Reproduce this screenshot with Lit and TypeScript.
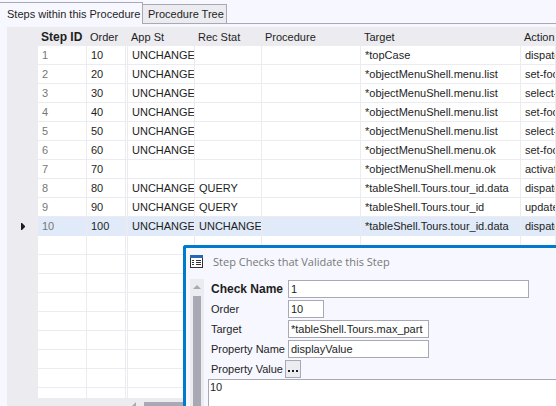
import { LitElement, html, css } from "lit";
import { customElement } from "lit/decorators.js";
import { classMap } from "lit/directives/class-map.js";

type Step = [id: string, order: string, app: string, rec: string, procedure: string, target: string, action: string];

const steps: Step[] = [
  ["1", "10", "UNCHANGED", "", "", "*topCase", "dispatch"],
  ["2", "20", "UNCHANGED", "", "", "*objectMenuShell.menu.list", "set-focus"],
  ["3", "30", "UNCHANGED", "", "", "*objectMenuShell.menu.list", "select-item"],
  ["4", "40", "UNCHANGED", "", "", "*objectMenuShell.menu.list", "set-focus"],
  ["5", "50", "UNCHANGED", "", "", "*objectMenuShell.menu.list", "select-item"],
  ["6", "60", "UNCHANGED", "", "", "*objectMenuShell.menu.ok", "set-focus"],
  ["7", "70", "", "", "", "*objectMenuShell.menu.ok", "activate"],
  ["8", "80", "UNCHANGED", "QUERY", "", "*tableShell.Tours.tour_id.data", "dispatch"],
  ["9", "90", "UNCHANGED", "QUERY", "", "*tableShell.Tours.tour_id", "update"],
  ["10", "100", "UNCHANGED", "UNCHANGED", "", "*tableShell.Tours.tour_id.data", "dispatch"],
];
const blank: Step = ["", "", "", "", "", "", ""];
const current = 9;

@customElement("step-grid")
export class StepGrid extends LitElement {
  static styles = css`
    :host { display: flex; flex-direction: column; flex: 1; min-width: 0; min-height: 0; background: #ebebf0; }
    .rows { flex: 1; min-height: 0; overflow: hidden; }
    table { width: 100%; table-layout: fixed; border-collapse: separate; border-spacing: 0; }
    .c-mark { width: 31px; }
    .c-id { width: 49px; }
    .c-order { width: 41px; }
    .c-stat { width: 67px; }
    .c-proc { width: 99px; }
    .c-target { width: 160px; }
    th, td { box-sizing: border-box; padding: 0 0 0 4px; text-align: left; font-weight: normal; white-space: nowrap; overflow: hidden; line-height: 18px; height: 19px; }
    th { padding-left: 3px; }
    td { background: #fff; border-right: 1px solid #ebebf0; border-bottom: 1px solid #ebebf0; }
    th.key { font: bold 12px/18px "Liberation Sans", sans-serif; }
    td.id { color: #777; }
    td.frozen { border-right: 3px double #ebebf0; }
    td.mark { background: #ebebf0; padding: 0 0 0 14px; border: 0; }
    .mark svg { display: block; }
    tr.on td:not(.mark) { background: #e0eaf8; border-bottom-color: #e0eaf8; }
    .hbar { display: flex; align-items: flex-end; gap: 8px; height: 8px; padding-left: 124px; }
    .hbar .thumb { flex: 1; height: 4px; background: #a9a9b5; }
  `;

  private row(s: Step, i: number) {
    const on = i === current;
    return html`<tr class=${classMap({ on })}>
      <td class="mark">${on ? html`<svg width="4" height="7" viewBox="0 0 4 7"><path d="M0 0h1l3 3v1l-3 3H0z" fill="#1e1e1e"/></svg>` : ""}</td>
      <td class="id">${s[0]}</td>
      <td class="frozen">${s[1]}</td>
      ${s.slice(2).map((v) => html`<td>${v}</td>`)}
    </tr>`;
  }

  render() {
    return html`
      <div class="rows">
        <table>
          <colgroup>
            <col class="c-mark"><col class="c-id"><col class="c-order"><col class="c-stat"><col class="c-stat"><col class="c-proc"><col class="c-target"><col>
          </colgroup>
          <thead>
            <tr><th></th><th class="key">Step ID</th><th>Order</th><th>App St</th><th>Rec Stat</th><th>Procedure</th><th>Target</th><th>Action</th></tr>
          </thead>
          <tbody>${[...steps, ...Array(30).fill(blank)].map((s, i) => this.row(s, i))}</tbody>
        </table>
      </div>
      <div class="hbar">
        <svg width="5" height="4" viewBox="0 0 5 4"><path d="M5 0v4H1z" fill="#a9a9b5"/></svg>
        <div class="thumb"></div>
      </div>`;
  }
}

@customElement("step-checks")
export class StepChecks extends LitElement {
  static styles = css`
    :host { display: flex; flex-direction: column; box-sizing: border-box; background: #f7f7ff; border: 3px solid #007acc; border-width: 3px 0 0 3px; border-top-left-radius: 3px; overflow: hidden; }
    header { display: flex; align-items: center; gap: 10px; height: 27px; padding: 0 4px; color: #777; }
    h2 { margin: 0; font: 11px/16px "Open Sans", sans-serif; }
    .body { flex: 1; min-height: 0; display: flex; gap: 4px; padding: 4px 0 0 4px; }
    .vbar { width: 14px; display: flex; flex-direction: column; align-items: center; gap: 7px; padding-top: 6px; box-sizing: border-box; background: #ebebf0; }
    .vbar .thumb { flex: 1; width: 8px; background: #a9a9b5; }
    .form { flex: 1; min-width: 0; display: flex; flex-direction: column; gap: 2px; padding-top: 1px; }
    .field { display: grid; grid-template-columns: 77px 1fr; align-items: center; padding-left: 3px; height: 18px; }
    .field.value { grid-template-columns: 74px 1fr; height: 17px; }
    label { line-height: 18px; white-space: nowrap; }
    label.key { font: bold 12px/18px "Liberation Sans", sans-serif; }
    input, textarea, button { box-sizing: border-box; font: inherit; color: inherit; border: 1px solid #a9a9b5; border-radius: 0; background: #fff; outline: 0; margin: 0; }
    input { height: 18px; padding: 0 2px; }
    .wide { width: 241px; max-width: 100%; }
    .mid { width: 141px; }
    .short { width: 36px; }
    button { width: 16px; height: 18px; padding: 4px 0 0; background: #ebebf0; display: grid; place-items: center; }
    textarea { flex: 1; min-height: 0; width: 100%; resize: none; padding: 0 1px; line-height: 15px; border-right: 0; border-bottom: 0; display: block; overflow: hidden; }
  `;

  render() {
    return html`
      <header>
        <svg width="13" height="13" viewBox="0 0 13 13" shape-rendering="crispEdges">
          <path d="M0 0h13v13H0z" fill="#333337"/><path d="M1 3h11v9H1z" fill="#fff"/><path d="M0 0h13v3H0z" fill="#2569b3"/>
          <path d="M2 5h2v1H2zM6 5h5v1H6zM2 7h2v1H2zM6 7h5v1H6zM2 9h2v1H2zM6 9h5v1H6z" fill="#333337"/>
        </svg>
        <h2>Step Checks that Validate this Step</h2>
      </header>
      <div class="body">
        <div class="vbar">
          <svg width="8" height="4" viewBox="0 0 8 4"><path d="M4 0l4 4H0z" fill="#a9a9b5"/></svg>
          <div class="thumb"></div>
        </div>
        <form class="form">
          <div class="field"><label class="key" for="name">Check Name</label><input id="name" class="wide" value="1"></div>
          <div class="field"><label for="order">Order</label><input id="order" class="short" value="10"></div>
          <div class="field"><label for="target">Target</label><input id="target" class="mid" value="*tableShell.Tours.max_part"></div>
          <div class="field"><label for="prop">Property Name</label><input id="prop" class="mid" value="displayValue"></div>
          <div class="field value"><label for="value">Property Value</label>
            <button type="button" aria-label="Edit value"><svg width="10" height="2" viewBox="0 0 10 2" shape-rendering="crispEdges"><path d="M0 0h2v2H0zM4 0h2v2H4zM8 0h2v2H8z" fill="#1e1e1e"/></svg></button>
          </div>
          <textarea id="value" .value=${"10"}></textarea>
        </form>
      </div>`;
  }
}

@customElement("app-root")
export class AppRoot extends LitElement {
  static styles = css`
    :host { display: flex; flex-direction: column; position: relative; box-sizing: border-box; height: 100vh; overflow: hidden; background: #f7f7ff; color: #1e1e1e; font: 11px/18px "Liberation Sans", Arial, sans-serif; }
    nav { display: flex; align-items: stretch; height: 22px; padding-top: 2px; }
    nav button { box-sizing: border-box; margin: 0; font: inherit; color: inherit; border: 1px solid #a9a9b5; background: #ebebf0; padding: 0 5px; white-space: nowrap; }
    nav .active { width: 143px; text-align: left; border-left: 0; border-bottom: 0; background: #f7f7ff; padding: 0 7px; }
    nav .other { width: 84px; margin-top: 2px; border-left: 0; }
    nav .rest { flex: 1; border-bottom: 1px solid #a9a9b5; }
    main { flex: 1; min-height: 0; display: flex; padding: 3px 0 0 7px; }
    .window { position: absolute; left: 183px; top: 245px; right: 0; bottom: 0; }
  `;

  render() {
    return html`
      <nav>
        <button class="active">Steps within this Procedure</button><button class="other">Procedure Tree</button><span class="rest"></span>
      </nav>
      <main><step-grid></step-grid></main>
      <step-checks class="window"></step-checks>`;
  }
}
